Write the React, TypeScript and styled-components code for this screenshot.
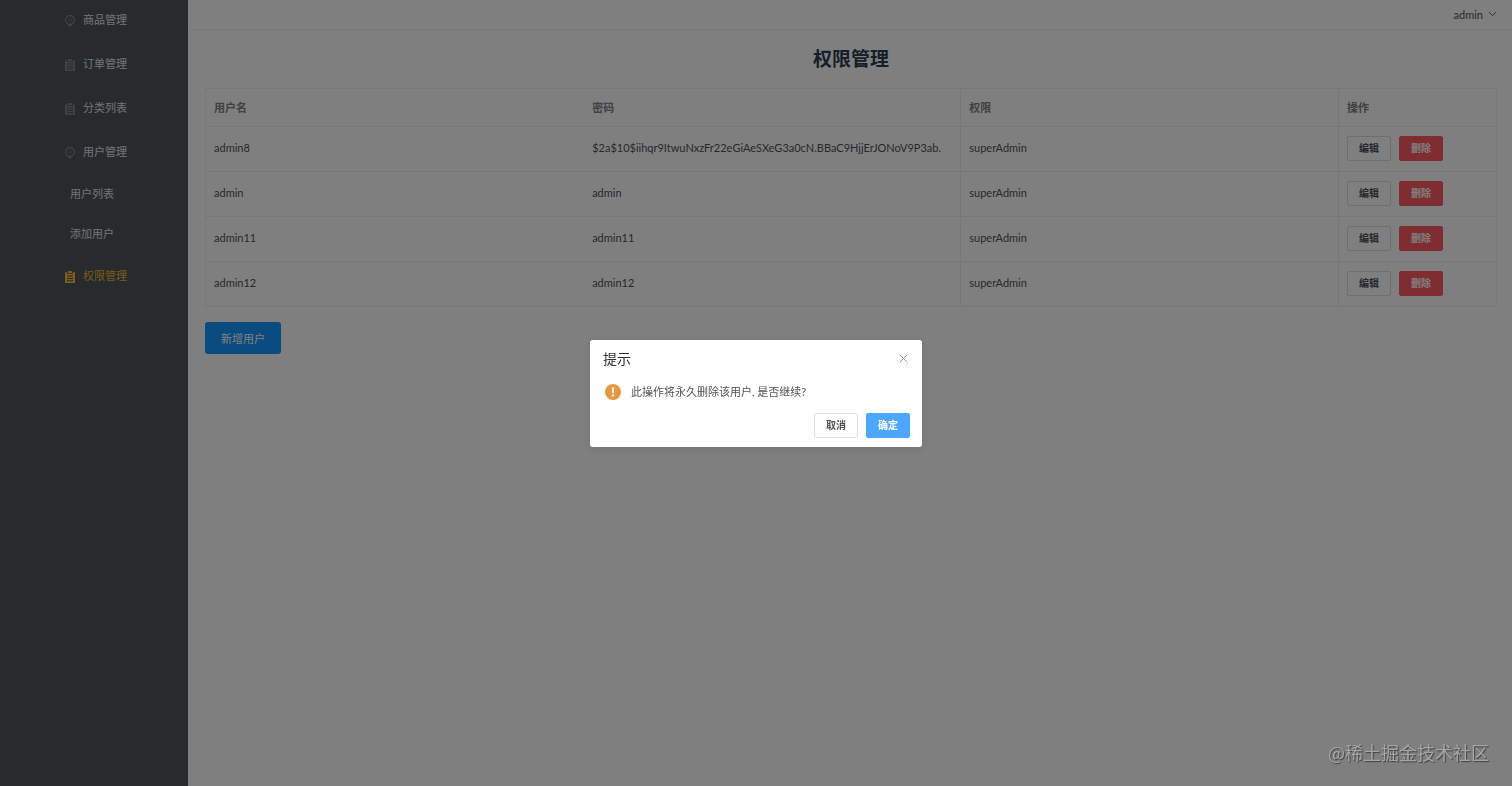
import React from 'react';
import styled, { createGlobalStyle, css } from 'styled-components';

const GlobalStyle = createGlobalStyle`
  * { box-sizing: border-box; }
  body {
    margin: 0;
    background: #fff;
    color: #606266;
    font-family: Lato, 'Noto Sans CJK SC', sans-serif;
    font-size: 11px;
    line-height: 16px;
  }
  button { font-family: inherit; cursor: pointer; }
`;

const Page = styled.div`
  display: flex;
  min-height: 100vh;
`;

const Sidebar = styled.nav`
  flex: none;
  width: 188px;
  overflow: hidden;
  background: #4e565c;
`;

const Menu = styled.ul`
  margin: -2px 0 0;
  padding: 0;
  list-style: none;
`;

const SubMenu = styled.ul`
  margin: 0;
  padding: 0;
  list-style: none;
`;

const MenuLink = styled.a<{ $active?: boolean }>`
  display: flex;
  align-items: center;
  gap: 8px;
  height: 44px;
  padding: 0 15px 0 65px;
  color: ${p => (p.$active ? '#f0b62c' : '#e4e6e8')};
  text-decoration: none;
  svg { flex: none; }
  svg:first-child { margin-top: 2px; }
`;

const SubLink = styled(MenuLink)`
  height: 40px;
  padding-left: 70px;
`;

const Label = styled.span`
  flex: 1;
`;

const Main = styled.div`
  flex: 1;
  min-width: 0;
  border-left: 1px solid #fff;
`;

const Header = styled.header`
  display: flex;
  justify-content: flex-end;
  height: 30px;
  padding: 0 15px;
  border-bottom: 1px solid #eceef3;
`;

const UserButton = styled.button`
  display: flex;
  align-items: center;
  gap: 5px;
  height: 28px;
  padding: 0;
  border: 0;
  background: none;
  color: #505256;
  font-size: 11px;
`;

const Content = styled.main`
  padding: 16px 15px 16px 16px;
`;

const Title = styled.h1`
  margin: 0 0 16px;
  color: #2c3e50;
  font-size: 19px;
  line-height: 26px;
  text-align: center;
`;

const Table = styled.table`
  width: 100%;
  table-layout: fixed;
  border-collapse: collapse;
  border: 1px solid #f2f4f8;
`;

const cell = css`
  padding: 0 8px;
  border: 1px solid #eceef3;
  text-align: left;
  &:first-child { border-left-color: #f2f4f8; border-right: 0; }
  &:nth-child(2) { border-left: 0; padding-left: 9px; }
  &:last-child { border-right-color: #f2f4f8; }
`;

const HeadCell = styled.th<{ $narrow?: boolean }>`
  ${cell}
  width: ${p => (p.$narrow ? '158px' : 'auto')};
  height: 38px;
  color: #808288;
  font-weight: 700;
`;

const Cell = styled.td`
  ${cell}
  height: 45px;
  padding-bottom: 2px;
  color: #505256;
  white-space: nowrap;
`;

const Actions = styled.div`
  display: flex;
  gap: 8px;
`;

type Kind = 'plain' | 'danger' | 'primary';
const kinds = {
  plain: css`border-color: #dcdfe6; background: #fff; color: #505256;`,
  danger: css`border-color: #ff5a60; background: #ff5a60; color: #fff;`,
  primary: css`border-color: #4ba7ff; background: #4ba7ff; color: #fff;`,
};

const SmallButton = styled.button<{ $kind: Kind }>`
  width: 44px;
  height: 25px;
  padding: 0;
  border: 1px solid;
  border-radius: 2px;
  font-size: 10px;
  font-weight: 700;
  line-height: 12px;
  ${p => kinds[p.$kind]}
`;

const AddButton = styled.button`
  height: 32px;
  margin-top: 15px;
  padding: 0 16px;
  border: 0;
  border-radius: 3px;
  background: #1498ff;
  color: #fff;
  font-size: 11px;
`;

const Overlay = styled.div`
  position: fixed;
  inset: 0;
  display: flex;
  align-items: center;
  justify-content: center;
  background: rgba(0, 0, 0, 0.5);
`;

const Dialog = styled.section`
  width: 332px;
  padding: 11px 12px 9px 13px;
  border-radius: 3px;
  background: #fff;
  box-shadow: 0 2px 10px rgba(0, 0, 0, 0.1);
`;

const DialogHead = styled.div`
  display: flex;
  align-items: center;
  justify-content: space-between;
`;

const DialogTitle = styled.h2`
  margin: 0;
  color: #303133;
  font-size: 14px;
  font-weight: 400;
  line-height: 16px;
`;

const CloseButton = styled.button`
  display: flex;
  padding: 2px;
  border: 0;
  background: none;
  color: #909399;
`;

const Message = styled.p`
  display: flex;
  align-items: center;
  gap: 10px;
  margin: 17px 0 13px;
  padding-left: 2px;
  color: #505256;
`;

const DialogActions = styled.div`
  display: flex;
  justify-content: flex-end;
  gap: 8px;
`;

const Watermark = styled.div`
  position: fixed;
  right: 23px;
  bottom: 21px;
  color: #a6a6a6;
  font-family: 'Noto Sans CJK SC', sans-serif;
  font-size: 18px;
  line-height: 26px;
  text-shadow: 1px 1px 1px #404040;
`;

const PinIcon = () => (
  <svg width="10" height="12" viewBox="0 0 10 12" aria-hidden="true">
    <path
      fill="#85898f"
      fillRule="evenodd"
      d="M5 0A5 5 0 0 1 7.2 9.4L5 12L2.8 9.4A5 5 0 0 1 5 0ZM5 1.2A3.8 3.8 0 1 0 5 8.8A3.8 3.8 0 1 0 5 1.2Z"
    />
    <circle cx="5" cy="5" r="1.6" fill="none" stroke="#6a7076" />
  </svg>
);

const ListIcon = ({ color = '#7c8187' }: { color?: string }) => (
  <svg width="10" height="12" viewBox="0 0 10 12" aria-hidden="true">
    <path
      fill={color}
      fillRule="evenodd"
      d="M0 1.2H2.2V2.8H7.8V1.2H10V12H0ZM2 4.6V5.6H8V4.6ZM2 6.9V7.9H8V6.9ZM2 9.2V10.2H8V9.2Z"
    />
    <rect x="3" y="0" width="4" height="2" fill={color} />
  </svg>
);

const Chevron = ({ up, color = '#606266' }: { up?: boolean; color?: string }) => (
  <svg width="9" height="6" viewBox="0 0 9 6" fill="none" stroke={color} aria-hidden="true">
    <path d={up ? 'M1 4.8L4.5 1.3L8 4.8' : 'M1 1.2L4.5 4.7L8 1.2'} />
  </svg>
);

const WarningIcon = () => (
  <svg width="16" height="16" viewBox="0 0 16 16" aria-hidden="true">
    <circle cx="8" cy="8" r="8" fill="#e99640" />
    <path d="M6.9 3.4H9.1L8.8 9.4H7.2Z" fill="#fff" />
    <circle cx="8" cy="11.6" r="1.2" fill="#fff" />
  </svg>
);

const CloseIcon = () => (
  <svg width="9" height="9" viewBox="0 0 9 9" fill="none" stroke="currentColor" aria-hidden="true">
    <path d="M.7 .7L8.3 8.3M8.3 .7L.7 8.3" />
  </svg>
);

const users = [
  { name: 'admin8', password: '$2a$10$iihqr9ItwuNxzFr22eGiAeSXeG3a0cN.BBaC9HjjErJONoV9P3ab.' },
  { name: 'admin', password: 'admin' },
  { name: 'admin11', password: 'admin11' },
  { name: 'admin12', password: 'admin12' },
];

export default function App() {
  return (
    <>
      <GlobalStyle />
      <Page>
        <Sidebar>
          <Menu>
            <li><MenuLink href="#goods"><PinIcon /><Label>商品管理</Label><Chevron color="#63696f" /></MenuLink></li>
            <li><MenuLink href="#orders"><ListIcon /><Label>订单管理</Label></MenuLink></li>
            <li><MenuLink href="#categories"><ListIcon /><Label>分类列表</Label></MenuLink></li>
            <li>
              <MenuLink href="#users"><PinIcon /><Label>用户管理</Label><Chevron up color="#63696f" /></MenuLink>
              <SubMenu>
                <li><SubLink href="#user-list">用户列表</SubLink></li>
                <li><SubLink href="#user-add">添加用户</SubLink></li>
              </SubMenu>
            </li>
            <li><MenuLink href="#permissions" $active><ListIcon color="#f6bc2e" /><Label>权限管理</Label></MenuLink></li>
          </Menu>
        </Sidebar>
        <Main>
          <Header>
            <UserButton type="button">admin<Chevron /></UserButton>
          </Header>
          <Content>
            <Title>权限管理</Title>
            <Table>
              <thead>
                <tr>
                  <HeadCell>用户名</HeadCell>
                  <HeadCell>密码</HeadCell>
                  <HeadCell>权限</HeadCell>
                  <HeadCell $narrow>操作</HeadCell>
                </tr>
              </thead>
              <tbody>
                {users.map(user => (
                  <tr key={user.name}>
                    <Cell>{user.name}</Cell>
                    <Cell>{user.password}</Cell>
                    <Cell>superAdmin</Cell>
                    <Cell>
                      <Actions>
                        <SmallButton type="button" $kind="plain">编辑</SmallButton>
                        <SmallButton type="button" $kind="danger">删除</SmallButton>
                      </Actions>
                    </Cell>
                  </tr>
                ))}
              </tbody>
            </Table>
            <AddButton type="button">新增用户</AddButton>
          </Content>
        </Main>
      </Page>
      <Overlay>
        <Dialog role="dialog" aria-modal="true" aria-labelledby="dialog-title">
          <DialogHead>
            <DialogTitle id="dialog-title">提示</DialogTitle>
            <CloseButton type="button" aria-label="关闭"><CloseIcon /></CloseButton>
          </DialogHead>
          <Message><WarningIcon />此操作将永久删除该用户, 是否继续?</Message>
          <DialogActions>
            <SmallButton type="button" $kind="plain">取消</SmallButton>
            <SmallButton type="button" $kind="primary">确定</SmallButton>
          </DialogActions>
        </Dialog>
      </Overlay>
      <Watermark>@稀土掘金技术社区</Watermark>
    </>
  );
}
